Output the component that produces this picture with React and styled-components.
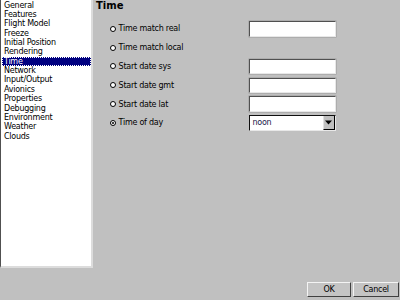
import React, { useState } from "react";
import styled, { createGlobalStyle } from "styled-components";

const GlobalStyle = createGlobalStyle`
  html, body {
    margin: 0;
    padding: 0;
    background: #c0c0c0;
  }
  * {
    box-sizing: border-box;
  }
`;

const Window = styled.div`
  width: 400px;
  height: 300px;
  display: flex;
  flex-direction: column;
  background: #c0c0c0;
  font-family: "DejaVu Sans", "Liberation Sans", sans-serif;
  font-size: 8px;
  letter-spacing: -0.25px;
  color: #000;
  overflow: hidden;
`;

const Main = styled.div`
  display: flex;
  height: 268px;
`;

const PageList = styled.ul`
  list-style: none;
  margin: 0;
  padding: 0.6px 0 0 1px;
  width: 93px;
  height: 268px;
  background: #fff;
  border-left: 1px solid #505050;
  border-right: 2px solid #dcdcdc;
  border-bottom: 2px solid #dcdcdc;
`;

const PageItem = styled.li`
  height: 9.36px;
  line-height: 9.36px;
  padding-left: 2px;
  white-space: nowrap;
  cursor: default;
  background: ${(p) => (p.$active ? "#000080" : "transparent")};
  color: ${(p) => (p.$active ? "#fff" : "#000")};
  outline: ${(p) => (p.$active ? "1px dotted #ffffff" : "none")};
  outline-offset: -1px;
`;

const Content = styled.div`
  flex: 1;
  padding: 0 0 0 3px;
`;

const Heading = styled.h2`
  margin: 0;
  font-size: 10px;
  font-weight: bold;
  letter-spacing: 0;
  line-height: 12px;
  margin-top: -0.5px;
`;

const Options = styled.div`
  margin-top: 8px;
  padding-left: 14px;
  display: flex;
  flex-direction: column;
`;

const Row = styled.div`
  display: flex;
  align-items: center;
  height: 18.8px;
`;

const Radio = styled.span`
  width: 6px;
  height: 6px;
  border-radius: 50%;
  border: 1.3px solid #000;
  background: #fff;
  margin-right: 2.6px;
  display: flex;
  align-items: center;
  justify-content: center;

  &::after {
    content: "";
    width: 2px;
    height: 2px;
    border-radius: 50%;
    background: ${(p) => (p.$checked ? "#000" : "transparent")};
  }
`;

const Label = styled.span`
  width: 130.4px;
  white-space: nowrap;
`;

const Field = styled.input`
  width: 87px;
  height: 15.5px;
  margin: 0;
  padding: 0 2px;
  font: inherit;
  background: #fff;
  border: 1px solid;
  border-color: #505050 #e8e8e8 #e8e8e8 #505050;
  box-shadow: 0 0 0 0.5px #9a9a9a;
  outline: none;
`;

const Select = styled.div`
  width: 87px;
  height: 15.5px;
  display: flex;
  align-items: stretch;
  background: #fff;
  border: 1px solid;
  border-color: #101010 #e8e8e8 #e8e8e8 #101010;
`;

const SelectValue = styled.span`
  flex: 1;
  padding-left: 2.5px;
  line-height: 13px;
  color: #20204a;
`;

const ArrowButton = styled.span`
  width: 12px;
  background: #c0c0c0;
  border-left: 1px solid #e0e0e0;
  border-right: 1px solid #000;
  border-bottom: 1px solid #000;
  display: flex;
  align-items: center;
  justify-content: center;
`;

const Footer = styled.div`
  flex: 1;
  display: flex;
  justify-content: flex-end;
  align-items: flex-end;
  gap: 2px;
  padding: 0 1px 3px 0;
`;

const Button = styled.button`
  width: ${(p) => p.$w}px;
  height: 15px;
  margin: 0;
  padding: 0;
  font: inherit;
  letter-spacing: inherit;
  color: #000;
  background: #c4c4c4;
  border: 1px solid;
  border-color: #f4f4f4 #404040 #404040 #f4f4f4;
  cursor: pointer;
`;

const pages = [
  "General",
  "Features",
  "Flight Model",
  "Freeze",
  "Initial Position",
  "Rendering",
  "Time",
  "Network",
  "Input/Output",
  "Avionics",
  "Properties",
  "Debugging",
  "Environment",
  "Weather",
  "Clouds",
];

const options = [
  { id: "real", label: "Time match real", field: "text" },
  { id: "local", label: "Time match local", field: null },
  { id: "sys", label: "Start date sys", field: "text" },
  { id: "gmt", label: "Start date gmt", field: "text" },
  { id: "lat", label: "Start date lat", field: "text" },
  { id: "tod", label: "Time of day", field: "select" },
];

function App() {
  const [page, setPage] = useState("Time");
  const [mode, setMode] = useState("tod");

  return (
    <Window>
      <GlobalStyle />
      <Main>
        <PageList>
          {pages.map((name) => (
            <PageItem
              key={name}
              $active={name === page}
              onClick={() => setPage(name)}
            >
              {name}
            </PageItem>
          ))}
        </PageList>
        <Content>
          <Heading>Time</Heading>
          <Options>
            {options.map((opt) => (
              <Row key={opt.id} onClick={() => setMode(opt.id)}>
                <Radio $checked={mode === opt.id} />
                <Label>{opt.label}</Label>
                {opt.field === "text" && <Field type="text" />}
                {opt.field === "select" && (
                  <Select>
                    <SelectValue>noon</SelectValue>
                    <ArrowButton>
                      <svg width="7" height="5" viewBox="0 0 7 5">
                        <path d="M0 0.5 H7 L3.5 4.5 Z" fill="#000" />
                      </svg>
                    </ArrowButton>
                  </Select>
                )}
              </Row>
            ))}
          </Options>
        </Content>
      </Main>
      <Footer>
        <Button $w={44}>OK</Button>
        <Button $w={46}>Cancel</Button>
      </Footer>
    </Window>
  );
}

export default App;
